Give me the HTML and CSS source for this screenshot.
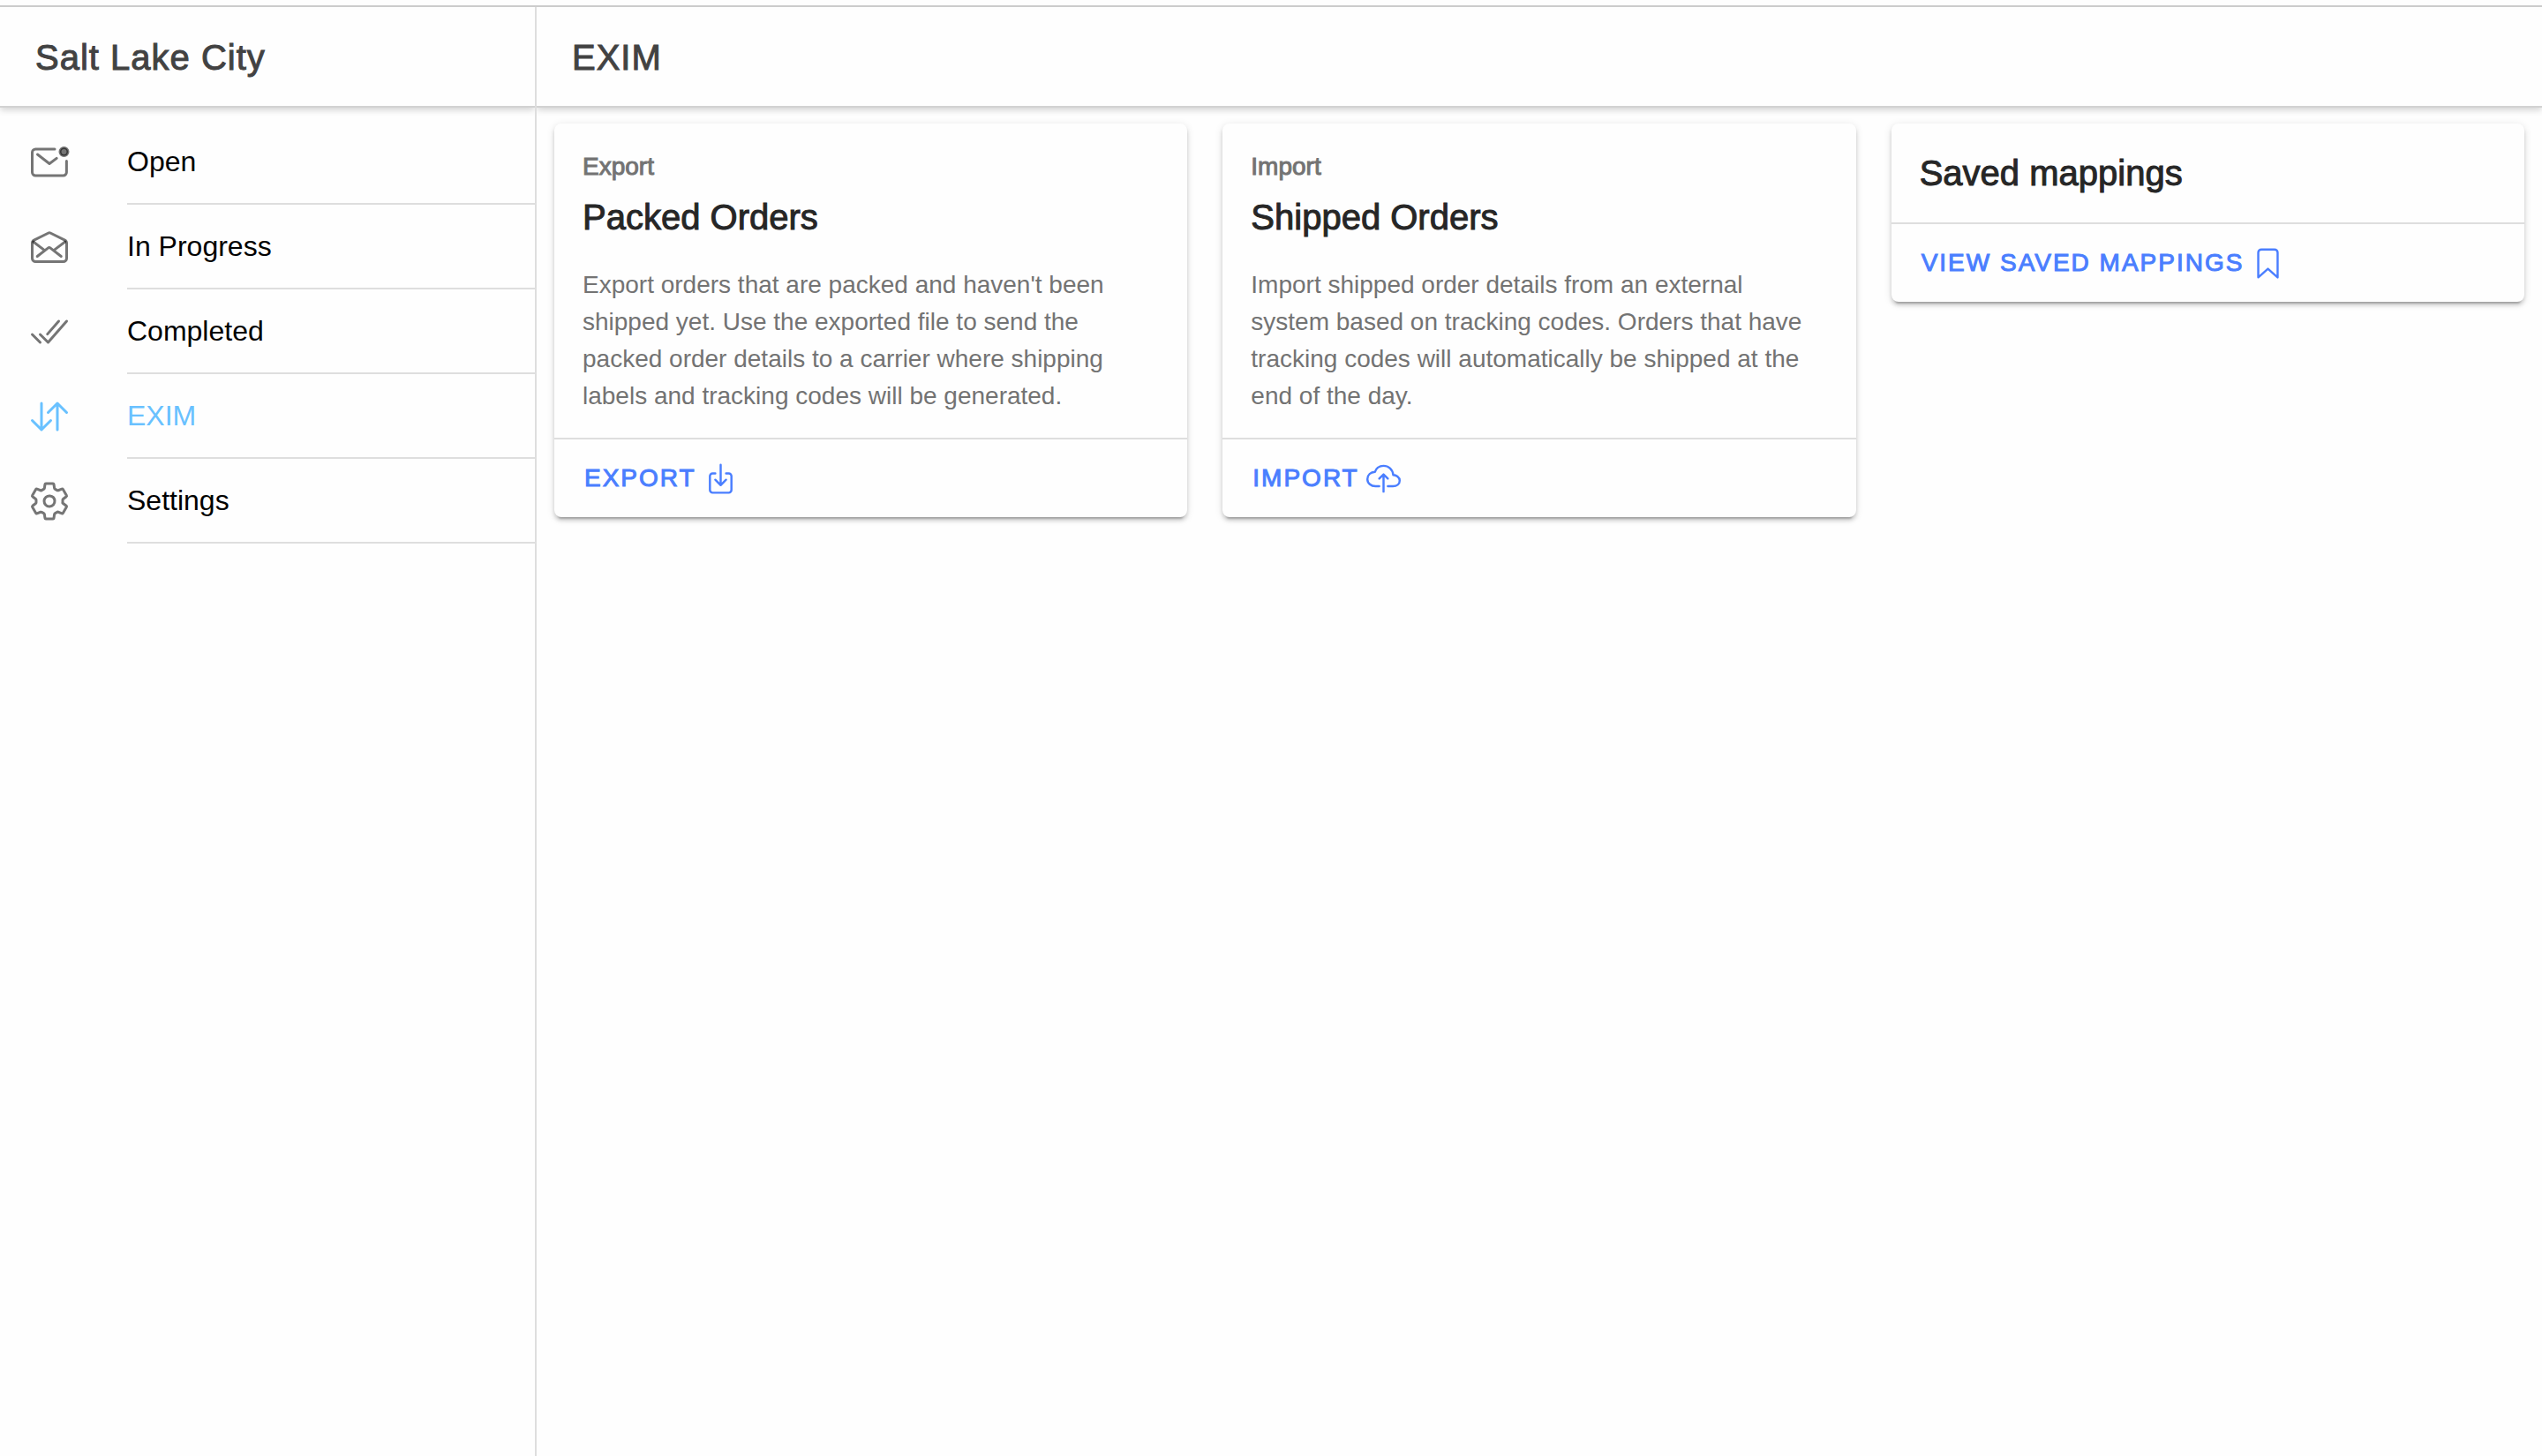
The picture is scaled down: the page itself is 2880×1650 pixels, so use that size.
FILE: index.html
```
<!DOCTYPE html>
<html lang="en">
<head>
  <meta charset="utf-8">
  <meta name="viewport" content="width=device-width, initial-scale=1">
  <title>EXIM</title>
  <link rel="stylesheet" href="styles.css">
</head>
<body>
  <div class="app">
    <aside class="menu">
      <header class="toolbar"><h2 class="toolbar-title">Salt Lake City</h2></header>
      <nav class="menu-list">
        <a class="menu-item" href="#open">
          <svg class="icon" viewBox="0 0 512 512" aria-hidden="true">
            <path d="M320 96H88a40 40 0 00-40 40v240a40 40 0 0040 40h334.73a40 40 0 0040-40V239"/>
            <path d="M112 160l144 112 87-65.67"/>
            <circle class="icon-dot" cx="431.95" cy="128.05" r="47.95"/>
          </svg>
          <span class="menu-label">Open</span>
        </a>
        <a class="menu-item" href="#in-progress">
          <svg class="icon" viewBox="0 0 512 512" aria-hidden="true">
            <path d="M441.6 171.61L266.87 85.37a24.57 24.57 0 00-21.74 0L70.4 171.61A40 40 0 0048 207.39V392c0 22.09 18.14 40 40.52 40h335c22.38 0 40.52-17.91 40.52-40V207.39a40 40 0 00-22.44-35.78z"/>
            <path d="M397.33 368L268.07 267.46a24 24 0 00-29.47 0L109.33 368M309.33 295l136-103M61.33 192l139 105"/>
          </svg>
          <span class="menu-label">In Progress</span>
        </a>
        <a class="menu-item" href="#completed">
          <svg class="icon" viewBox="0 0 512 512" aria-hidden="true">
            <path d="M464 128L240 384l-96-96M144 384l-96-96M368 128L232 284"/>
          </svg>
          <span class="menu-label">Completed</span>
        </a>
        <a class="menu-item menu-item-active" href="#exim" aria-current="page">
          <svg class="icon" viewBox="0 0 512 512" aria-hidden="true">
            <path d="M464 208L352 96 240 208M352 113.13V416M48 304l112 112 112-112M160 398V96"/>
          </svg>
          <span class="menu-label">EXIM</span>
        </a>
        <a class="menu-item" href="#settings">
          <svg class="icon" viewBox="0 0 512 512" aria-hidden="true">
            <path d="M262.29 192.31a64 64 0 1057.4 57.4 64.13 64.13 0 00-57.4-57.4zM416.39 256a154.34 154.34 0 01-1.53 20.79l45.21 35.46a10.81 10.81 0 012.45 13.75l-42.77 74a10.81 10.81 0 01-13.14 4.59l-44.9-18.08a16.11 16.11 0 00-15.17 1.75A164.48 164.48 0 01325 400.8a15.94 15.94 0 00-8.82 12.14l-6.73 47.89a11.08 11.08 0 01-10.68 9.17h-85.54a11.11 11.11 0 01-10.69-8.87l-6.72-47.82a16.07 16.07 0 00-9-12.22 155.3 155.3 0 01-21.46-12.57 16 16 0 00-15.11-1.71l-44.89 18.07a10.81 10.81 0 01-13.14-4.58l-42.77-74a10.8 10.8 0 012.45-13.75l38.21-30a16.05 16.05 0 006-14.08c-.36-4.17-.58-8.33-.58-12.5s.21-8.27.58-12.35a16 16 0 00-6.07-13.94l-38.19-30A10.81 10.81 0 0149.48 186l42.77-74a10.81 10.81 0 0113.14-4.59l44.9 18.08a16.11 16.11 0 0015.17-1.75A164.48 164.48 0 01187 111.2a15.94 15.94 0 008.82-12.14l6.73-47.89A11.08 11.08 0 01213.23 42h85.54a11.11 11.11 0 0110.69 8.87l6.72 47.82a16.07 16.07 0 009 12.22 155.3 155.3 0 0121.46 12.57 16 16 0 0015.11 1.71l44.89-18.07a10.81 10.81 0 0113.14 4.58l42.77 74a10.8 10.8 0 01-2.45 13.75l-38.21 30a16.05 16.05 0 00-6.05 14.08c.33 4.14.55 8.3.55 12.47z"/>
          </svg>
          <span class="menu-label">Settings</span>
        </a>
      </nav>
    </aside>

    <div class="page">
      <header class="toolbar"><h1 class="toolbar-title">EXIM</h1></header>
      <main class="cards">
        <section class="card">
          <div class="card-header">
            <p class="card-subtitle">Export</p>
            <h2 class="card-title">Packed Orders</h2>
          </div>
          <p class="card-content">Export orders that are packed and haven't been shipped yet. Use the exported file to send the packed order details to a carrier where shipping labels and tracking codes will be generated.</p>
          <div class="card-footer">
            <button class="button" type="button">EXPORT
              <svg class="button-icon" viewBox="0 0 512 512" aria-hidden="true">
                <path d="M336 176h40a40 40 0 0140 40v208a40 40 0 01-40 40H136a40 40 0 01-40-40V216a40 40 0 0140-40h40"/>
                <path d="M176 272l80 80 80-80M256 48v288"/>
              </svg>
            </button>
          </div>
        </section>

        <section class="card">
          <div class="card-header">
            <p class="card-subtitle">Import</p>
            <h2 class="card-title">Shipped Orders</h2>
          </div>
          <p class="card-content">Import shipped order details from an external system based on tracking codes. Orders that have tracking codes will automatically be shipped at the end of the day.</p>
          <div class="card-footer">
            <button class="button" type="button">IMPORT
              <svg class="button-icon" viewBox="0 0 512 512" aria-hidden="true">
                <path d="M320 367.79h76c55 0 100-29.21 100-83.6s-53-81.47-96-83.6c-8.89-85.06-71-136.8-144-136.8-69 0-113.44 45.79-128 91.2-60 5.7-112 43.88-112 106.4s54 106.4 120 106.4h56"/>
                <path d="M320 255.79l-64-64-64 64M256 448.21V207.79"/>
              </svg>
            </button>
          </div>
        </section>

        <section class="card">
          <div class="card-header">
            <h2 class="card-title">Saved mappings</h2>
          </div>
          <div class="card-footer">
            <button class="button" type="button">VIEW SAVED MAPPINGS
              <svg class="button-icon" viewBox="0 0 512 512" aria-hidden="true">
                <path d="M352 48H160a48 48 0 00-48 48v368l144-128 144 128V96a48 48 0 00-48-48z"/>
              </svg>
            </button>
          </div>
        </section>
      </main>
    </div>
  </div>
</body>
</html>
```
FILE: styles.css
```
* {
  box-sizing: border-box;
}

body {
  margin: 0;
  padding-top: 6px;
  background: #fefefe;
  color: #000;
  font-family: "Liberation Sans", Arial, sans-serif;
}

h1, h2, p {
  margin: 0;
}

.app {
  display: flex;
  min-height: calc(100vh - 6px);
  border-top: 2px solid #ccc;
}

.menu {
  flex: 0 0 608px;
  border-right: 2px solid #dedede;
}

.page {
  flex: 1;
  min-width: 0;
}

.toolbar {
  display: flex;
  align-items: center;
  height: 112px;
  padding: 2px 40px 0;
  box-shadow: 0 2px 0 #d2d2d2, 0 4px 8px rgba(0, 0, 0, 0.2);
  clip-path: inset(0 0 -16px 0);
}

.toolbar-title {
  color: #424242;
  font-size: 40px;
  font-weight: 400;
  line-height: 48px;
  letter-spacing: 1px;
  -webkit-text-stroke: 1px currentColor;
}

.menu-list {
  padding-top: 16px;
}

.menu-item {
  display: flex;
  align-items: center;
  gap: 64px;
  padding-left: 32px;
  color: inherit;
  text-decoration: none;
}

.menu-label {
  flex: 1;
  padding: 29px 0;
  border-bottom: 2px solid #dedede;
  font-size: 32px;
  line-height: 36px;
}

.icon,
.button-icon {
  fill: none;
  stroke: currentColor;
  stroke-width: 32px;
  stroke-linecap: round;
  stroke-linejoin: round;
}

.icon {
  width: 48px;
  height: 48px;
  color: rgba(0, 0, 0, 0.54);
}

.icon-dot {
  fill: currentColor;
}

.menu-item-active,
.menu-item-active .icon {
  color: #69c1ff;
}

.cards {
  display: grid;
  grid-template-columns: repeat(3, 1fr);
  align-items: start;
  gap: 40px;
  padding: 20px;
}

.card {
  border-radius: 8px;
  background: #fefefe;
  box-shadow: 0 6px 2px -4px rgba(0, 0, 0, 0.2), 0 4px 4px rgba(0, 0, 0, 0.14), 0 2px 10px rgba(0, 0, 0, 0.12);
}

.card-header {
  display: flex;
  flex-direction: column;
  gap: 16px;
  padding: 32px;
}

.card-subtitle {
  color: #737373;
  font-size: 28px;
  line-height: 34px;
  -webkit-text-stroke: 1px currentColor;
}

.card-title {
  color: #262626;
  font-size: 40px;
  font-weight: 400;
  line-height: 48px;
  -webkit-text-stroke: 1px currentColor;
}

.card-content {
  padding: 0 32px 26px;
  color: #737373;
  font-size: 28px;
  line-height: 42px;
}

.card-footer {
  padding: 8px 32px;
  border-top: 2px solid #dedede;
}

.button {
  display: flex;
  align-items: center;
  gap: 8px;
  height: 72px;
  padding: 0 2px;
  border: 0;
  background: none;
  color: #4a7eff;
  font: inherit;
  font-size: 28px;
  letter-spacing: 2px;
  -webkit-text-stroke: 1px currentColor;
  cursor: pointer;
}

.button-icon {
  width: 39px;
  height: 39px;
}
```
